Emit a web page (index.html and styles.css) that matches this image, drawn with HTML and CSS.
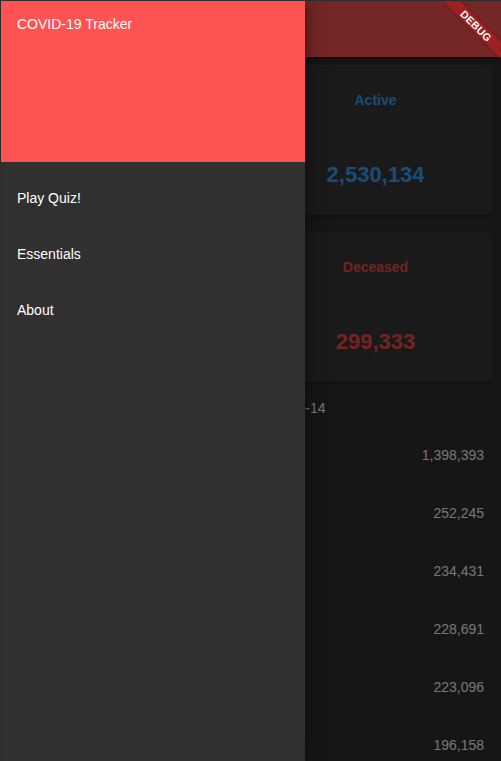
FILE: index.html
```html
<!DOCTYPE html>
<html lang="en">
<head>
<meta charset="utf-8">
<title>COVID-19 Tracker</title>
<link rel="stylesheet" href="styles.css">
</head>
<body>
<div class="screen">
  <div class="app">
    <header class="appbar">
      <span class="appbar-menu"></span>
    </header>
    <main class="content">
      <section class="cards">
        <div class="card"><div class="card-label confirmed">Confirmed</div><div class="card-value confirmed">4,331,523</div></div>
        <div class="card"><div class="card-label active">Active</div><div class="card-value active">2,530,134</div></div>
        <div class="card"><div class="card-label recovered">Recovered</div><div class="card-value recovered">1,502,056</div></div>
        <div class="card"><div class="card-label deceased">Deceased</div><div class="card-value deceased">299,333</div></div>
      </section>
      <div class="updated">Countries with the most active cases, 2020-05-14</div>
      <ul class="countries">
        <li class="country"><span class="name">USA</span><span class="count">1,398,393</span></li>
        <li class="country"><span class="name">Russia</span><span class="count">252,245</span></li>
        <li class="country"><span class="name">UK</span><span class="count">234,431</span></li>
        <li class="country"><span class="name">Spain</span><span class="count">228,691</span></li>
        <li class="country"><span class="name">Italy</span><span class="count">223,096</span></li>
        <li class="country"><span class="name">Brazil</span><span class="count">196,158</span></li>
      </ul>
    </main>
  </div>
  <div class="scrim"></div>
  <nav class="drawer">
    <div class="drawer-header">COVID-19 Tracker</div>
    <ul class="drawer-list">
      <li class="drawer-item">Play Quiz!</li>
      <li class="drawer-item">Essentials</li>
      <li class="drawer-item">About</li>
    </ul>
  </nav>
  <div class="debug-corner"><div class="debug-ribbon">DEBUG</div></div>
</div>
</body>
</html>
```

FILE: styles.css
```css
* { box-sizing: border-box; }
html, body { margin: 0; padding: 0; }
body {
  background: #2d2d2d;
  font-family: "Liberation Sans", Arial, sans-serif;
}
.screen {
  position: relative;
  width: 501px;
  height: 761px;
  overflow: hidden;
  border-top: 1px solid #2d2d2d;
  border-left: 1px solid #2d2d2d;
  background: #303030;
}
.app {
  display: flex;
  flex-direction: column;
  height: 100%;
  background: #303030;
}
.appbar {
  height: 56px;
  flex: none;
  background: #ff5454;
  display: flex;
  align-items: center;
  padding-left: 16px;
  box-shadow: 0 2px 4px rgba(0,0,0,0.4);
}
.appbar-menu {
  width: 18px;
  height: 12px;
  border-top: 2px solid #fff;
  border-bottom: 2px solid #fff;
}
.content { flex: 1; }
.cards {
  display: grid;
  grid-template-columns: 1fr 1fr;
  column-gap: 14px;
  row-gap: 17px;
  padding: 8px 8px 0;
}
.card {
  height: 150px;
  background: #393939;
  border-radius: 8px;
  padding-top: 27px;
  text-align: center;
  box-shadow: 0 2px 3px rgba(0,0,0,0.25);
}
.card-label {
  font-size: 14px;
  line-height: 16px;
  font-weight: bold;
}
.card-value {
  margin-top: 54px;
  font-size: 22px;
  line-height: 26px;
  font-weight: bold;
}
.active { color: #3ba6ff; }
.deceased { color: #ff4a4a; }
.confirmed { color: #ff9a3b; }
.recovered { color: #4cd964; }
.updated {
  height: 44px;
  padding: 18px 0 0 18px;
  font-size: 14px;
  line-height: 16px;
  color: #ffffff;
  white-space: nowrap;
}
.countries {
  list-style: none;
  margin: 0;
  padding: 0;
}
.country {
  height: 58px;
  display: flex;
  justify-content: space-between;
  align-items: center;
  padding: 0 17px 0 16px;
  font-size: 14px;
  color: #ffffff;
}
.scrim {
  position: absolute;
  inset: 0;
  background: rgba(0,0,0,0.54);
}
.drawer {
  position: absolute;
  top: 0;
  left: 0;
  bottom: 0;
  width: 304px;
  background: #303030;
  box-shadow: 0 0 18px rgba(0,0,0,0.55);
}
.drawer-header {
  height: 161px;
  background: #ff5252;
  color: #fff;
  font-size: 14px;
  line-height: 16px;
  padding: 15px 16px;
  margin-bottom: 8px;
}
.drawer-list {
  list-style: none;
  margin: 0;
  padding: 0;
}
.drawer-item {
  height: 56px;
  display: flex;
  align-items: center;
  padding-left: 16px;
  color: #fff;
  font-size: 14px;
}
.debug-corner {
  position: absolute;
  top: 0;
  right: 0;
  width: 0;
  height: 0;
  transform: rotate(45deg);
  transform-origin: 0 0;
}
.debug-ribbon {
  position: absolute;
  left: -40px;
  top: 29px;
  width: 80px;
  height: 12px;
  background: rgba(183,28,28,0.63);
  color: #fff;
  font-weight: bold;
  font-size: 10.5px;
  line-height: 12px;
  text-align: center;
  letter-spacing: 0.3px;
  box-shadow: 0 0 3px rgba(0,0,0,0.3);
}
```
